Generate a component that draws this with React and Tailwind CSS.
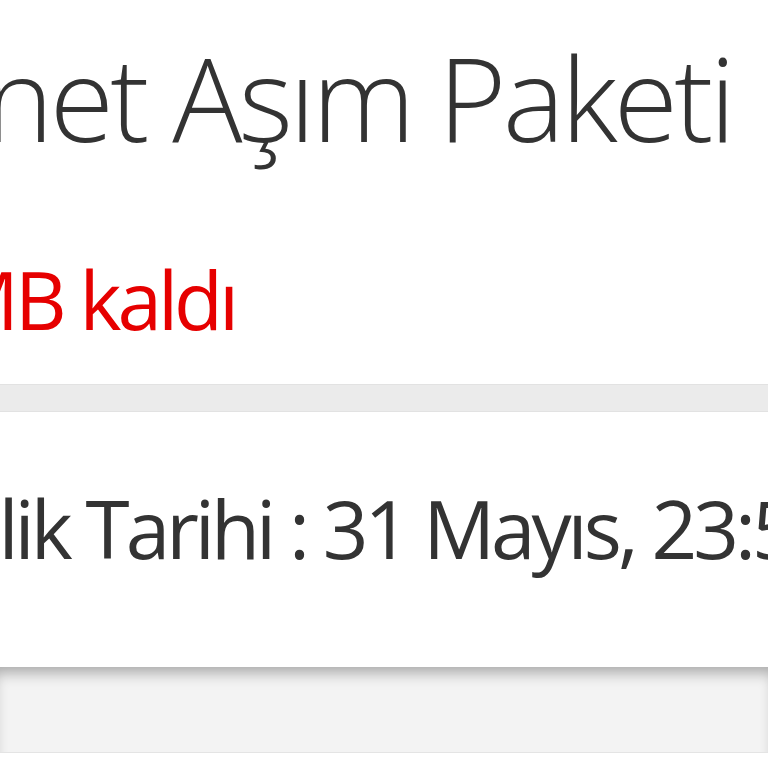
export default function App() {
  return (
    <div
      className="flex h-[768px] w-[768px] flex-col overflow-hidden bg-white text-[#333333]"
      style={{ fontFamily: '"Open Sans", "Noto Sans", sans-serif' }}
    >
      {/* package header */}
      <div className="h-[384px] shrink-0 bg-white">
        <h1 className="ml-[-244px] mt-[17px] whitespace-nowrap text-[117px] font-light leading-[160px] tracking-[-3.8px]">
          İnternet Aşım Paketi
        </h1>
        <p className="ml-[-195px] mt-[72px] whitespace-nowrap text-[80px] font-medium leading-[100px] tracking-[-4px] text-[#e60000]">
          250 MB kaldı
        </p>
      </div>

      <div className="h-[28px] shrink-0 border-y border-[#e2e2e2] bg-[#ebebeb]" />

      {/* validity card */}
      <div className="h-[255px] shrink-0 bg-white">
        <p className="ml-[-233px] mt-[66px] whitespace-nowrap text-[80px] leading-[100px] tracking-[-4px]">
          Geçerlilik Tarihi : 31 Mayıs, 23:59
        </p>
      </div>

      <div className="h-[86px] shrink-0 border-b border-[#e4e4e4] bg-[#f3f3f3] shadow-[inset_0_12px_14px_-6px_rgba(0,0,0,0.3)]" />
      <div className="flex-1 bg-white" />
    </div>
  );
}
